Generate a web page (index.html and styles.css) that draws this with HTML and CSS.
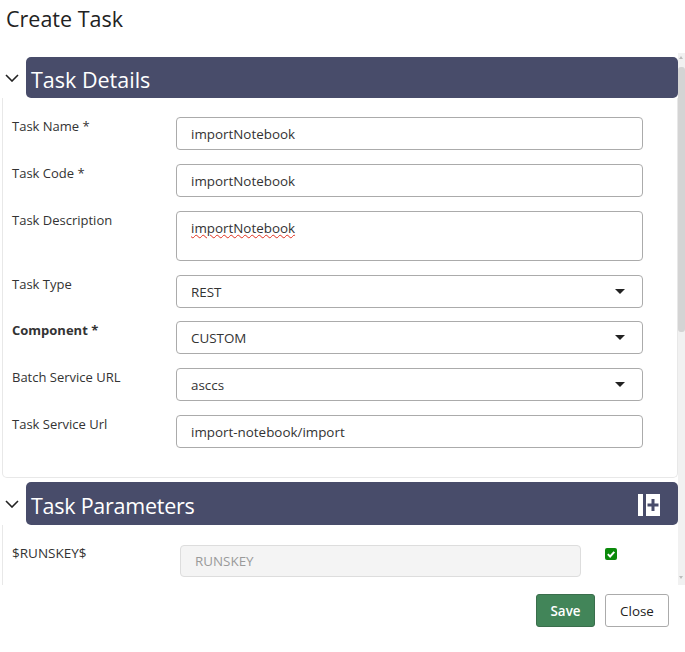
FILE: index.html
```html
<!DOCTYPE html>
<html lang="en">
<head>
    <meta charset="UTF-8">
    <meta name="viewport" content="width=device-width, initial-scale=1.0">
    <title>Create Task</title>
    <link rel="stylesheet" href="styles.css">
</head>
<body>
    <h1 class="title">Create Task</h1>

    <div class="scroll-area">
        <div class="content">
            <div class="section-head">
                <svg class="chevron" width="14" height="8" viewBox="0 0 14 8"><path d="M1 1l6 6 6-6" fill="none" stroke="#222" stroke-width="1.6"/></svg>
                <div class="bar">Task Details</div>
            </div>
            <div class="panel details">
                <div class="row">
                    <label>Task Name *</label>
                    <div class="field">importNotebook</div>
                </div>
                <div class="row">
                    <label>Task Code *</label>
                    <div class="field">importNotebook</div>
                </div>
                <div class="row">
                    <label>Task Description</label>
                    <div class="field area"><span class="misspelled">importNotebook</span></div>
                </div>
                <div class="row">
                    <label>Task Type</label>
                    <div class="field select">REST<span class="caret"></span></div>
                </div>
                <div class="row tight">
                    <label class="strong">Component *</label>
                    <div class="field select">CUSTOM<span class="caret"></span></div>
                </div>
                <div class="row">
                    <label>Batch Service URL</label>
                    <div class="field select">asccs<span class="caret"></span></div>
                </div>
                <div class="row">
                    <label>Task Service Url</label>
                    <div class="field">import-notebook/import</div>
                </div>
            </div>

            <div class="section-head second">
                <svg class="chevron" width="14" height="8" viewBox="0 0 14 8"><path d="M1 1l6 6 6-6" fill="none" stroke="#222" stroke-width="1.6"/></svg>
                <div class="bar">
                    Task Parameters
                    <svg class="add-icon" width="22" height="22" viewBox="0 0 22 22">
                        <rect x="0" y="0" width="5" height="22" fill="#fff"/>
                        <path d="M8 0h14v22H8z" fill="#fff"/>
                        <path d="M13.500 5h3v4.500h4v3h-4v4.500h-3v-4.500h-4v-3h4z" fill="#484c6a"/>
                    </svg>
                </div>
            </div>
            <div class="panel params">
                <div class="param-row">
                    <label>$RUNSKEY$</label>
                    <div class="field disabled">RUNSKEY</div>
                    <span class="check">
                        <svg width="12" height="12" viewBox="0 0 12 12"><path d="M2.800 6.200l2.300 2.300 4.200-4.700" fill="none" stroke="#fff" stroke-width="1.900"/></svg>
                    </span>
                </div>
            </div>
        </div>
        <div class="scrollbar">
            <span class="arrow up"></span>
            <div class="thumb"></div>
            <span class="arrow down"></span>
        </div>
    </div>

    <div class="footer">
        <button class="btn save">Save</button>
        <button class="btn">Close</button>
    </div>
</body>
</html>
```

FILE: styles.css
```css
body {
    margin: 0;
    height: 652px;
    overflow: hidden;
    background-color: #FFFFFF;
    color: #333333;
    font-family: "Open Sans", "Noto Sans", sans-serif;
    font-size: 13px;
}
.title {
    margin: 0;
    padding: 5px 0 0 6px;
    height: 53px;
    box-sizing: border-box;
    font-size: 21.500px;
    font-weight: 400;
    line-height: 28px;
    color: #222222;
}
.scroll-area {
    display: flex;
    height: 532px;
    overflow: hidden;
}
.content {
    width: 678px;
    padding-top: 4px;
}
.section-head {
    display: flex;
    align-items: center;
    height: 41px;
}
.section-head.second {
    height: 43px;
    margin-top: 4px;
}
.chevron {
    margin: 0 7px 0 5px;
}
.bar {
    flex: 1;
    display: flex;
    align-items: center;
    justify-content: space-between;
    box-sizing: border-box;
    height: 100%;
    padding: 3px 18px 0 5px;
    background-color: #484C6A;
    border-radius: 5px;
    color: #FFFFFF;
    font-size: 21.500px;
}
.second .bar {
    letter-spacing: -0.25px;
}
.panel {
    margin-left: 2px;
    border: 1px solid #E8E8E8;
    border-top: 0;
    border-radius: 0 0 5px 5px;
}
.panel.details {
    height: 380px;
    box-sizing: border-box;
    padding: 19px 34px 0 9px;
    display: flex;
    flex-direction: column;
    gap: 14px;
}
.panel.params {
    border-bottom: 0;
    border-right: 0;
    height: 60px;
    padding: 20px 0 0 9px;
}
.row {
    display: flex;
}
.row.tight {
    margin-top: -1px;
}
.row label {
    width: 164px;
    flex-shrink: 0;
    line-height: 18px;
}
.strong {
    font-weight: 700;
}
.field {
    position: relative;
    flex: 1;
    height: 33px;
    box-sizing: border-box;
    padding: 0 14px;
    border: 1px solid #ABABAB;
    border-radius: 4px;
    font-size: 13.400px;
    line-height: 33px;
}
.field.area {
    height: 50px;
}
.misspelled {
    text-decoration: underline wavy #E0301E 1.200px;
}
.caret {
    position: absolute;
    right: 17px;
    top: 13px;
    border: 5px solid transparent;
    border-top-color: #222222;
    border-bottom: 0;
}
.param-row {
    display: flex;
}
.param-row label {
    width: 168px;
    flex-shrink: 0;
    margin-top: -1px;
    font-size: 13.500px;
    line-height: 18px;
}
.field.disabled {
    flex: none;
    width: 401px;
    height: 32px;
    background-color: #F4F4F4;
    border-color: #DDDDDD;
    color: #9A9A9A;
    line-height: 30px;
}
.check {
    width: 12px;
    height: 12px;
    margin: 3px 0 0 24px;
    background-color: #0B8A0B;
    border-radius: 2px;
}
.check svg {
    display: block;
}
.scrollbar {
    position: relative;
    width: 7px;
    background-color: #F1F1F1;
    padding-top: 14px;
}
.thumb {
    height: 265px;
    background-color: #D4D4D4;
    border-radius: 3px;
}
.arrow {
    position: absolute;
    left: 1px;
    border: 2.500px solid transparent;
}
.arrow.up {
    top: 3px;
    border-top: 0;
    border-bottom: 3px solid #BDBDBD;
}
.arrow.down {
    bottom: 6px;
    border-bottom: 0;
    border-top: 3px solid #BDBDBD;
}
.footer {
    display: flex;
    justify-content: flex-end;
    gap: 10px;
    padding: 9px 16px 0 0;
}
.btn {
    width: 64px;
    height: 33px;
    padding: 0;
    background-color: #FFFFFF;
    border: 1px solid #ABABAB;
    border-radius: 3px;
    color: #222222;
    font-family: inherit;
    font-size: 13.400px;
    cursor: pointer;
}
.btn.save {
    width: 59px;
    background-color: #428559;
    border-color: #3A6E4C;
    color: #FFFFFF;
    font-weight: 600;
}
```
